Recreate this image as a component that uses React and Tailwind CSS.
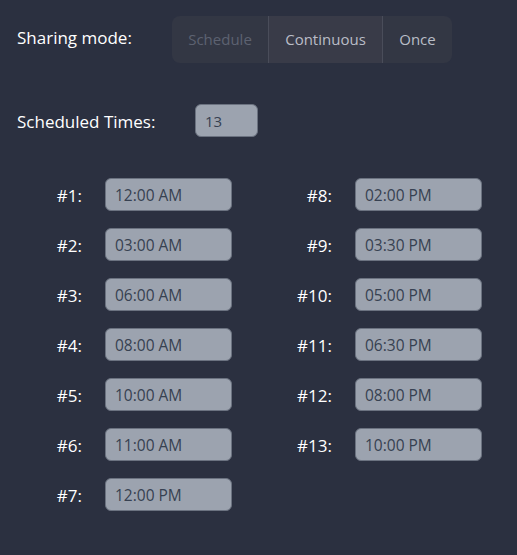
const TIMES = [
  "12:00 AM", "03:00 AM", "06:00 AM", "08:00 AM", "10:00 AM", "11:00 AM", "12:00 PM",
  "02:00 PM", "03:30 PM", "05:00 PM", "06:30 PM", "08:00 PM", "10:00 PM",
];

function TimeRow({ n, value }) {
  return (
    <div className="flex h-[50px] items-center">
      <span className="mt-[4px] w-[42px] shrink-0 text-right text-[17px] text-white">#{n}:</span>
      <div className="ml-[23px] flex h-[33px] w-[127px] shrink-0 items-center rounded-[6px] border border-[#6b7280] bg-[#9ca3af] px-[9px] pt-[3px] text-[15.5px] text-[#374151]">
        {value}
      </div>
    </div>
  );
}

export default function App() {
  const left = TIMES.slice(0, 7);
  const right = TIMES.slice(7);

  return (
    <div className="h-[555px] w-[517px] bg-[#2b3040] font-['Open_Sans',sans-serif]">
      <div className="flex items-center pl-[17px] pt-[16px]">
        <span className="mb-[4px] w-[155px] shrink-0 text-[17px] text-white">Sharing mode:</span>
        <div className="flex h-[47px] overflow-hidden rounded-[8px] bg-[#333744] text-[15px]">
          <div className="flex w-[96px] items-center justify-center text-[#5d6271]">Schedule</div>
          <div className="flex w-[114px] items-center justify-center border-l border-[#4a4d5a] bg-[#393b48] text-[#b9bdc7]">
            Continuous
          </div>
          <div className="flex w-[70px] items-center justify-center border-l border-[#4a4d5a] text-[#b9bdc7]">Once</div>
        </div>
      </div>

      <div className="mt-[41px] flex items-center pl-[17px]">
        <span className="mt-[3px] w-[178px] shrink-0 text-[17px] text-white">Scheduled Times:</span>
        <div className="flex h-[33px] w-[63px] items-center rounded-[6px] border border-[#6b7280] bg-[#9ca3af] px-[9px] pt-[2px] text-[15px] text-[#374151]">
          13
        </div>
      </div>

      <div className="mt-[32px] flex pl-[40px]">
        <div className="w-[250px] shrink-0">
          {left.map((t, i) => (
            <TimeRow key={i} n={i + 1} value={t} />
          ))}
        </div>
        <div className="w-[192px] shrink-0">
          {right.map((t, i) => (
            <TimeRow key={i} n={i + 8} value={t} />
          ))}
        </div>
      </div>
    </div>
  );
}
